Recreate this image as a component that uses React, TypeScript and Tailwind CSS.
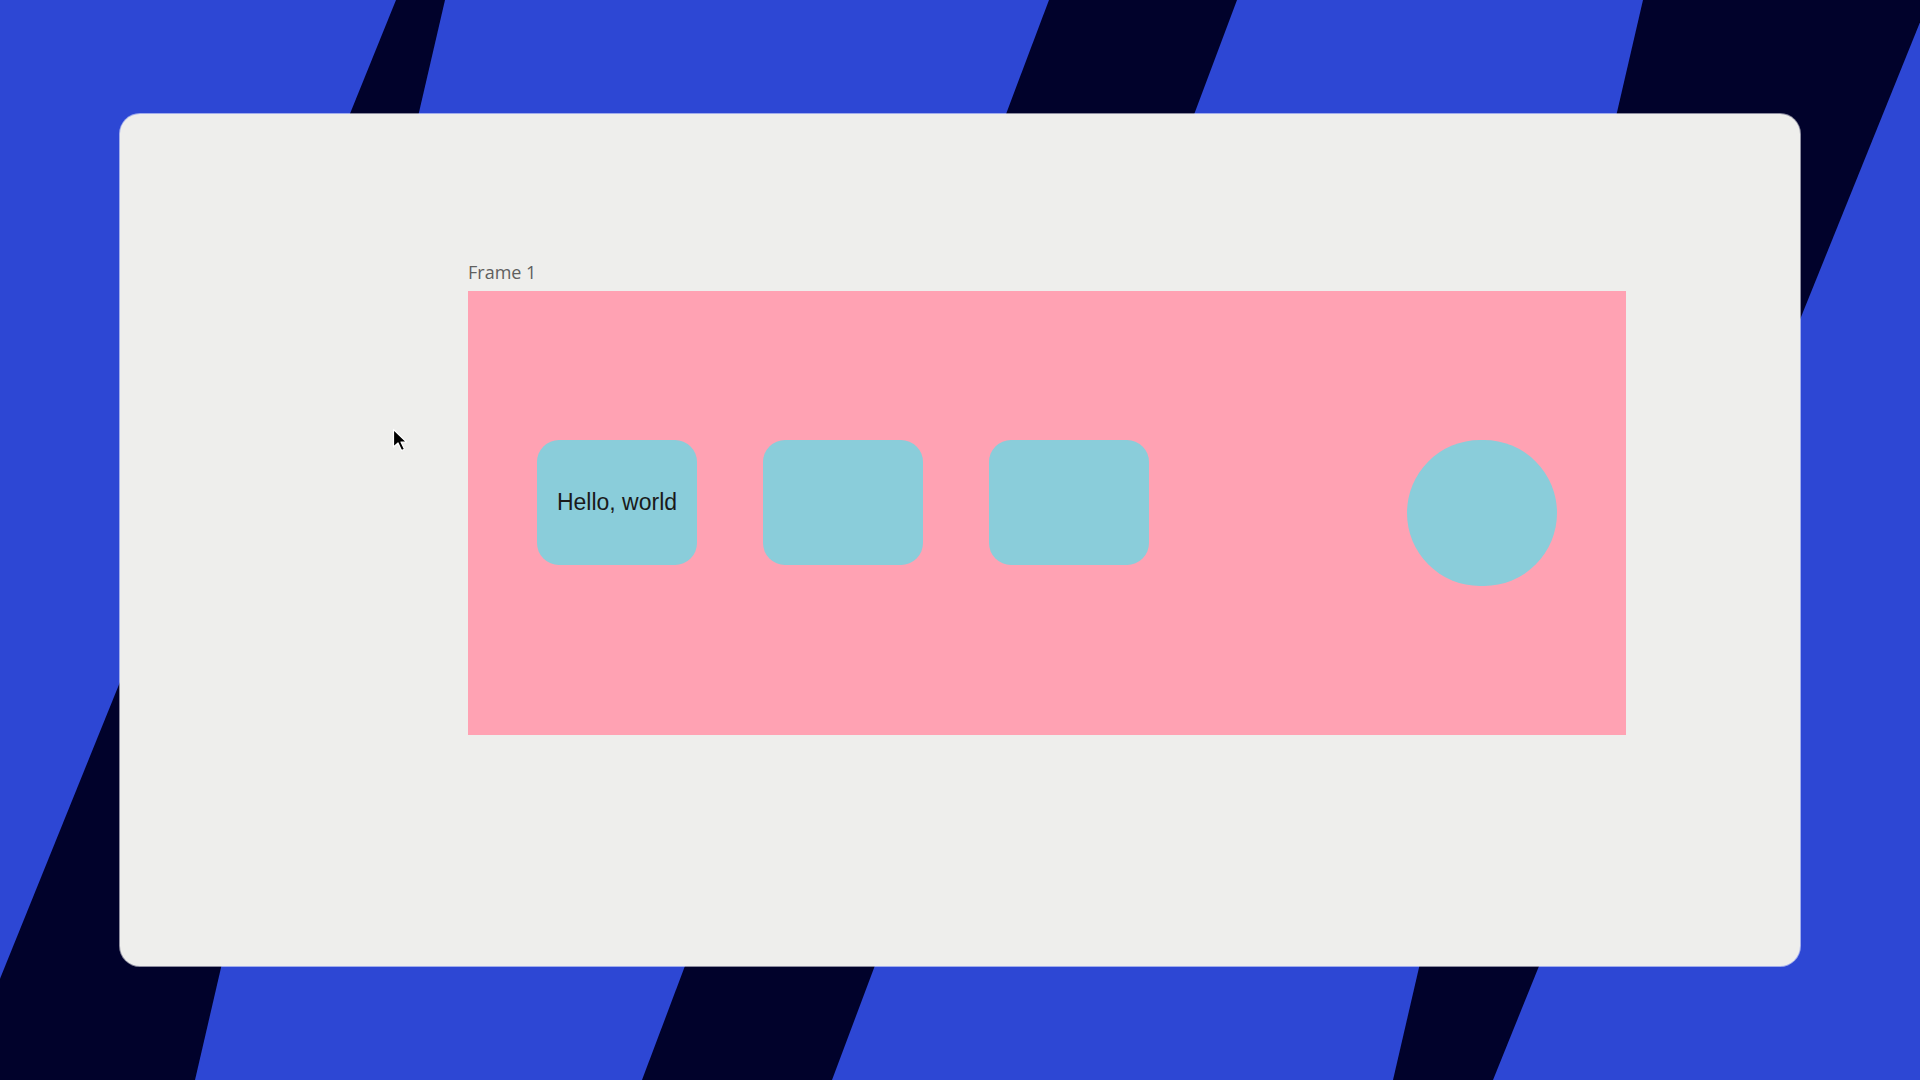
export default function App() {
  return (
    <main className="relative w-[1920px] h-[1080px] overflow-hidden bg-[#2d47d4]">
      {/* Background bands */}
      <svg
        className="absolute inset-0"
        width="1920"
        height="1080"
        viewBox="0 0 1920 1080"
      >
        <polygon points="396,0 445,0 195,1080 -41,1080" fill="#01022b" />
        <polygon points="1049,0 1237,0 832,1080 642,1080" fill="#01022b" />
        <polygon points="1643,0 1929,0 1493,1080 1393,1080" fill="#01022b" />
      </svg>

      <div className="relative pt-[114px] pl-[120px]">
        {/* Canvas card */}
        <div className="relative w-[1680px] h-[852px] rounded-[20px] bg-[#eeeeec] shadow-[0_0_0_1px_rgba(255,255,255,0.55)] pl-[348px] pt-[148px]">
          <div className="h-[21px] leading-[21px] text-[18px] text-[#5f5f5f] font-['Open_Sans',sans-serif] mb-[8px]">
            Frame 1
          </div>

          {/* Frame */}
          <div className="w-[1158px] h-[444px] bg-[#ffa2b3] flex items-start pl-[69px] pt-[149px]">
            <div className="w-[160px] h-[125px] rounded-[22px] bg-[#8acdda] flex items-center justify-center">
              <span className="text-[23px] text-[#1a1a1a] font-['Liberation_Sans',Arial,sans-serif]">
                Hello, world
              </span>
            </div>
            <div className="ml-[66px] w-[160px] h-[125px] rounded-[22px] bg-[#8acdda]" />
            <div className="ml-[66px] w-[160px] h-[125px] rounded-[22px] bg-[#8acdda]" />
            <div className="ml-[258px] w-[150px] h-[146px] rounded-full bg-[#8acdda]" />
          </div>

          {/* Cursor */}
          <svg
            className="absolute left-[272px] top-[314px]"
            width="16"
            height="25"
            viewBox="0 0 16 25"
          >
            <path
              d="M1.5 1.5 L1.5 19 L6 15 L9.5 22.5 L12.5 21.2 L9 14 L14.5 14 Z"
              fill="#000"
              stroke="#fff"
              strokeWidth="1.2"
              strokeLinejoin="round"
            />
          </svg>
        </div>
      </div>
    </main>
  );
}
